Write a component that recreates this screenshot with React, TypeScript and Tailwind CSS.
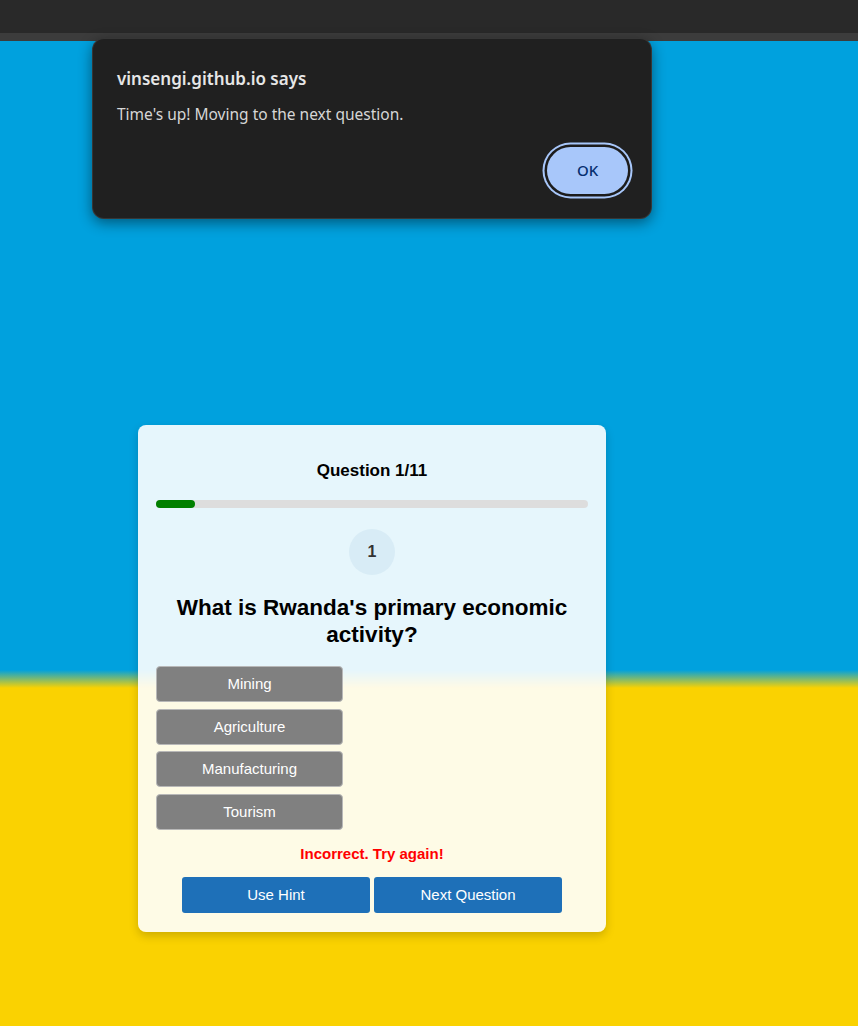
import React from "react";

const options = ["Mining", "Agriculture", "Manufacturing", "Tourism"];

export default function App() {
  const progress = (1 / 11) * 100;
  return (
    <div className="relative flex h-[1026px] w-full flex-col overflow-hidden font-['Liberation_Sans',Arial,sans-serif]">
      <div className="h-[33px] bg-[#292929]" />
      <div className="h-[8px] bg-[#3c3c3c]" />
      <main className="flex-1 bg-[linear-gradient(to_bottom,#00a1de_0px,#00a1de_629px,#fad201_647px,#fad201_100%)] pl-[138px] pt-[384px]">
        <div className="w-[468px] rounded-[8px] bg-white/90 px-[18px] pt-[36px] pb-[19px] shadow-[0_4px_10px_rgba(0,0,0,0.18)]">
          <h3 className="text-center text-[17px] font-bold leading-[20px] text-black">Question 1/11</h3>
          <div className="mt-[19px] h-[8px] w-full rounded-full bg-[#dddddd]">
            <div className="h-full rounded-full bg-[#008000]" style={{ width: `${progress}%` }} />
          </div>
          <div className="mx-auto mt-[21px] flex h-[46px] w-[46px] items-center justify-center rounded-full bg-[#d8ecf6] text-[16px] font-bold text-[#333333]">
            1
          </div>
          <h2 className="mt-[18.5px] text-center text-[22.5px] font-bold leading-[27px] text-black">
            What is Rwanda's primary economic activity?
          </h2>
          <div className="mt-[18.5px] flex flex-col gap-[6.5px]">
            {options.map((o) => (
              <button
                key={o}
                className="h-[36px] w-[187px] rounded-[4px] border border-[#b8b8b8] bg-[#808080] pt-[1px] text-[15px] text-white"
              >
                {o}
              </button>
            ))}
          </div>
          <p className="mt-[15.5px] text-center text-[15px] font-bold leading-[18px] text-[#ff0000]">Incorrect. Try again!</p>
          <div className="mt-[14px] flex justify-center gap-[4px]">
            <button className="h-[36px] w-[188px] rounded-[3px] bg-[#1e70b8] pt-[1px] text-[15px] text-white">Use Hint</button>
            <button className="h-[36px] w-[188px] rounded-[3px] bg-[#1e70b8] pt-[1px] text-[15px] text-white">Next Question</button>
          </div>
        </div>
      </main>

      <div className="absolute left-[92px] top-[38px] flex h-[181px] w-[560px] flex-col rounded-[12px] border border-white/10 bg-[#202020] px-[24px] pt-[26px] font-['Noto_Sans',sans-serif] shadow-[0_4px_14px_rgba(0,0,0,0.45)]">
        <div className="text-[17px] font-semibold leading-[28px] text-[#e6e6e6]">vinsengi.github.io says</div>
        <div className="mt-[11px] text-[15.5px] leading-[21px] text-[#d6d6d6]">Time's up! Moving to the next question.</div>
        <div className="mt-auto mb-[24px] flex justify-end">
          <button className="mr-[-1px] h-[47px] w-[81px] rounded-full bg-[#a8c7fa] text-[15px] font-medium text-[#062e6f] shadow-[0_0_0_2.5px_#1c1c1c,0_0_0_4.5px_#a8c7fa]">
            OK
          </button>
        </div>
      </div>
    </div>
  );
}
